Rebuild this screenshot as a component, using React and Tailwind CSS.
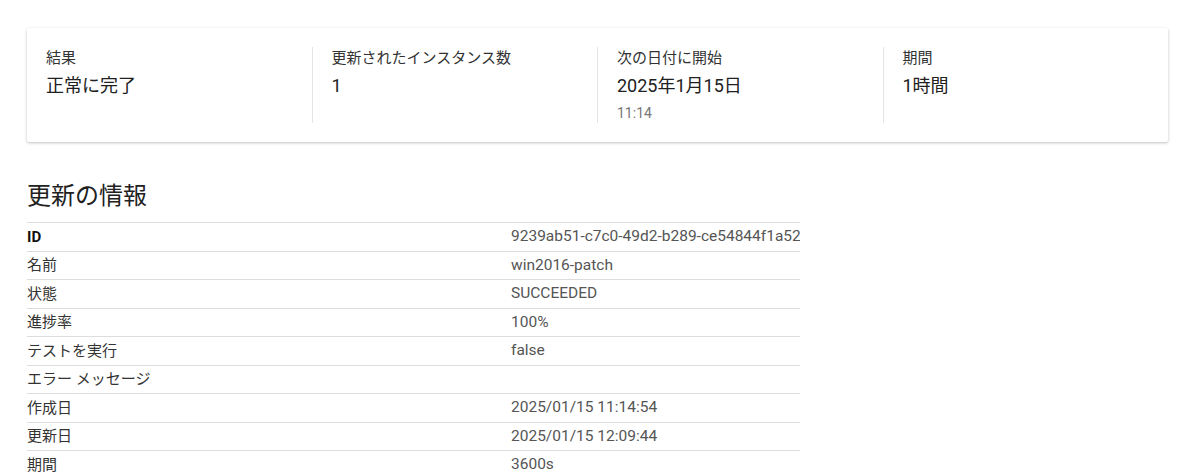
import React from 'react';

const font = { fontFamily: 'Roboto, "Noto Sans CJK JP", sans-serif' };

function Stat({ label, value, sub, first }) {
  return (
    <div className={`flex-1 pl-[19px] pr-5 h-[76px] ${first ? '' : 'border-l border-[#e5e5e5]'}`}>
      <div className="text-[15px] leading-[20px] text-[#333] pt-[1px]">{label}</div>
      <div className="text-[18px] leading-[26px] text-[#212121] mt-[5px]">{value}</div>
      {sub && <div className="text-[14px] leading-[18px] text-[#777] mt-[5px]">{sub}</div>}
    </div>
  );
}

const rows = [
  ['ID', '9239ab51-c7c0-49d2-b289-ce54844f1a52', true],
  ['名前', 'win2016-patch'],
  ['状態', 'SUCCEEDED'],
  ['進捗率', '100%'],
  ['テストを実行', 'false'],
  ['エラー メッセージ', ''],
  ['作成日', '2025/01/15 11:14:54'],
  ['更新日', '2025/01/15 12:09:44'],
  ['期間', '3600s'],
];

export default function App() {
  return (
    <div className="min-h-[474px] bg-white px-[27px] pt-[28px]" style={font}>
      <div className="w-[1141px] bg-white rounded-[2px] shadow-[0_1px_3px_rgba(0,0,0,0.25)] py-[19px] flex">
        <Stat first label="結果" value="正常に完了" />
        <Stat label="更新されたインスタンス数" value="1" />
        <Stat label="次の日付に開始" value="2025年1月15日" sub="11:14" />
        <Stat label="期間" value="1時間" />
      </div>

      <h2 className="text-[24px] leading-[32px] text-[#212121] mt-[38px] mb-[10px]">更新の情報</h2>

      <div className="w-[773px] overflow-hidden">
        {rows.map(([k, v, bold]) => (
          <div key={k} className="grid grid-cols-[484px_1fr] h-[28.5px] items-center border-t border-[#dddddd] text-[15px] whitespace-nowrap">
            <div className={bold ? 'font-bold text-[#111]' : 'text-[#333]'}>{k}</div>
            <div className="text-[15.5px] text-[#555] overflow-hidden">{v}</div>
          </div>
        ))}
      </div>
    </div>
  );
}
